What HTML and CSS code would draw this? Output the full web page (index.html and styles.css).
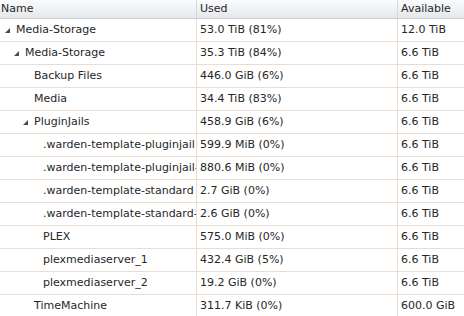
FILE: index.html
```html
<!DOCTYPE html>
<html>
<head>
<meta charset="utf-8">
<link rel="stylesheet" href="styles.css">
</head>
<body>
<div class="grid">
  <div class="row head">
    <div class="cell name hname">Name</div>
    <div class="cell used">Used</div>
    <div class="cell avail">Available</div>
  </div>
  <div class="row">
    <div class="cell name l1"><span class="exp"><svg width="5" height="5" viewBox="0 0 5 5"><polygon points="5,0 5,5 0,5"/></svg></span><span class="t">Media-Storage</span></div>
    <div class="cell used">53.0 TiB (81%)</div>
    <div class="cell avail">12.0 TiB</div>
  </div>
  <div class="row">
    <div class="cell name l2"><span class="exp"><svg width="5" height="5" viewBox="0 0 5 5"><polygon points="5,0 5,5 0,5"/></svg></span><span class="t">Media-Storage</span></div>
    <div class="cell used">35.3 TiB (84%)</div>
    <div class="cell avail">6.6 TiB</div>
  </div>
  <div class="row">
    <div class="cell name l3"><span class="exp"></span><span class="t">Backup Files</span></div>
    <div class="cell used">446.0 GiB (6%)</div>
    <div class="cell avail">6.6 TiB</div>
  </div>
  <div class="row">
    <div class="cell name l3"><span class="exp"></span><span class="t">Media</span></div>
    <div class="cell used">34.4 TiB (83%)</div>
    <div class="cell avail">6.6 TiB</div>
  </div>
  <div class="row">
    <div class="cell name l3"><span class="exp"><svg width="5" height="5" viewBox="0 0 5 5"><polygon points="5,0 5,5 0,5"/></svg></span><span class="t">PluginJails</span></div>
    <div class="cell used">458.9 GiB (6%)</div>
    <div class="cell avail">6.6 TiB</div>
  </div>
  <div class="row">
    <div class="cell name l4"><span class="exp"></span><span class="t">.warden-template-pluginjail</span></div>
    <div class="cell used">599.9 MiB (0%)</div>
    <div class="cell avail">6.6 TiB</div>
  </div>
  <div class="row">
    <div class="cell name l4"><span class="exp"></span><span class="t">.warden-template-pluginjail-9.2</span></div>
    <div class="cell used">880.6 MiB (0%)</div>
    <div class="cell avail">6.6 TiB</div>
  </div>
  <div class="row">
    <div class="cell name l4"><span class="exp"></span><span class="t">.warden-template-standard</span></div>
    <div class="cell used">2.7 GiB (0%)</div>
    <div class="cell avail">6.6 TiB</div>
  </div>
  <div class="row">
    <div class="cell name l4"><span class="exp"></span><span class="t">.warden-template-standard-9.2</span></div>
    <div class="cell used">2.6 GiB (0%)</div>
    <div class="cell avail">6.6 TiB</div>
  </div>
  <div class="row">
    <div class="cell name l4"><span class="exp"></span><span class="t">PLEX</span></div>
    <div class="cell used">575.0 MiB (0%)</div>
    <div class="cell avail">6.6 TiB</div>
  </div>
  <div class="row">
    <div class="cell name l4"><span class="exp"></span><span class="t">plexmediaserver_1</span></div>
    <div class="cell used">432.4 GiB (5%)</div>
    <div class="cell avail">6.6 TiB</div>
  </div>
  <div class="row">
    <div class="cell name l4"><span class="exp"></span><span class="t">plexmediaserver_2</span></div>
    <div class="cell used">19.2 GiB (0%)</div>
    <div class="cell avail">6.6 TiB</div>
  </div>
  <div class="row">
    <div class="cell name l3"><span class="exp"></span><span class="t">TimeMachine</span></div>
    <div class="cell used">311.7 KiB (0%)</div>
    <div class="cell avail">600.0 GiB</div>
  </div>
</div>
</body>
</html>
```

FILE: styles.css
```css
html, body {
  margin: 0;
  padding: 0;
  background: #ffffff;
  overflow: hidden;
}
.grid {
  width: 464px;
  font-family: "DejaVu Sans", Verdana, sans-serif;
  font-size: 11px;
  color: #262626;
}
.row {
  display: grid;
  grid-template-columns: 197px 201px 1fr;
  height: 23px;
  border-bottom: 1px solid #ebdccd;
  box-sizing: border-box;
}
.cell {
  display: flex;
  align-items: center;
  padding-left: 3px;
  white-space: nowrap;
  overflow: hidden;
  min-width: 0;
  border-right: 1px solid #ebdccd;
  line-height: 22px;
}
.cell.avail {
  border-right: none;
}
.row.head {
  height: 19px;
  background: linear-gradient(#fafbfc, #e5e8ec);
  border-bottom: 1px solid #c9ccd1;
}
.row.head .cell {
  line-height: 18px;
  border-right: 1px solid #d6d8dc;
}
.row.head .cell.avail {
  border-right: none;
}
.cell.hname {
  padding-left: 1px;
}
.l1 { padding-left: 5px; }
.l2 { padding-left: 14px; }
.l3 { padding-left: 23px; }
.l4 { padding-left: 32px; }
.exp {
  flex: 0 0 11px;
  width: 11px;
  display: flex;
  align-items: center;
  height: 22px;
}
.exp svg {
  fill: #4a4a4a;
  margin-top: 1px;
}
.t {
  flex: 0 1 auto;
  min-width: 0;
  overflow: hidden;
  white-space: nowrap;
}
```
